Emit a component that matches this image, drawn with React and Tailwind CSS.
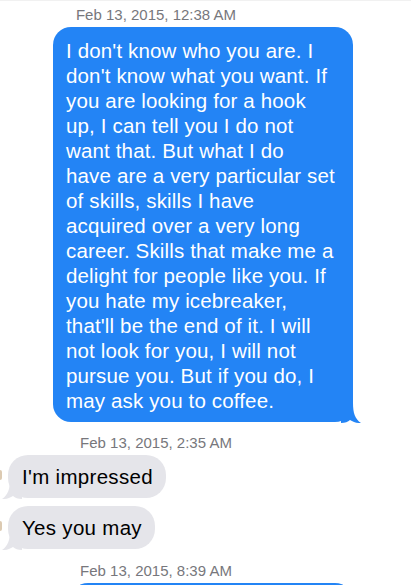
import React from 'react';

const lines = [
	"I don't know who you are. I",
	"don't know what you want. If",
	"you are looking for a hook",
	"up, I can tell you I do not",
	"want that. But what I do",
	"have are a very particular set",
	"of skills, skills I have",
	"acquired over a very long",
	"career. Skills that make me a",
	"delight for people like you. If",
	"you hate my icebreaker,",
	"that'll be the end of it. I will",
	"not look for you, I will not",
	"pursue you. But if you do, I",
	"may ask you to coffee."
];

function Stamp({ children, className = '' }) {
	return (
		<div className={`w-[312px] text-center text-[15px] leading-[18px] text-[#77777c] ${className}`}>
			{children}
		</div>
	);
}

function BlueTail() {
	return (
		<svg width="20" height="20" viewBox="0 0 20 20" className="absolute right-[-8px] bottom-[-1px]">
			<path d="M0 0 H12 C12 10 14 16 20 20 C16 20.3 12 19 9 17 C7 19 4 20 0 20 Z" fill="#2384f5" />
		</svg>
	);
}

function GreyTail() {
	return (
		<svg width="20" height="20" viewBox="0 0 20 20" className="absolute left-[-6px] bottom-[-1px] -scale-x-100">
			<path d="M0 0 H12 C12 10 14 16 20 20 C16 20.3 12 19 9 17 C7 19 4 20 0 20 Z" fill="#e5e5ea" />
		</svg>
	);
}

function Incoming({ text, mt }) {
	return (
		<div className={`flex items-start ${mt}`}>
			<div className="w-[2px] h-[10px] mt-[15px] rounded-r-full bg-[#dccab2]" />
			<div className="relative ml-[6px] rounded-[20px] bg-[#e5e5ea] pl-[14px] pr-[13px] py-[9px] text-[20.5px] leading-[25px] tracking-[0.3px] text-black">
				{text}
				<GreyTail />
			</div>
		</div>
	);
}

export default function App() {
	return (
		<div className="w-[411px] h-[585px] overflow-hidden bg-white border-t border-[#f1f1f1] font-['Liberation_Sans',Arial,sans-serif]">
			<Stamp className="pt-[5px]">Feb 13, 2015, 12:38 AM</Stamp>

			<div className="mt-[3px] pl-[53px]">
				<div className="relative w-[300px] rounded-[18px] bg-[#2384f5] pl-[13px] pr-[10px] pt-[11px] pb-[9px] text-[20.5px] leading-[25px] tracking-[0.15px] text-white whitespace-nowrap">
					{lines.map((l, i) => (
						<div key={i}>{l}</div>
					))}
					<BlueTail />
				</div>
			</div>

			<Stamp className="mt-[12px]">Feb 13, 2015, 2:35 AM</Stamp>

			<Incoming text="I'm impressed" mt="mt-[3px]" />
			<Incoming text="Yes you may" mt="mt-[8px]" />

			<Stamp className="mt-[13px]">Feb 13, 2015, 8:39 AM</Stamp>

			<div className="mt-[3px] pl-[70px]">
				<div className="w-[283px] h-[40px] rounded-[18px] bg-[#2384f5]" />
			</div>
		</div>
	);
}
